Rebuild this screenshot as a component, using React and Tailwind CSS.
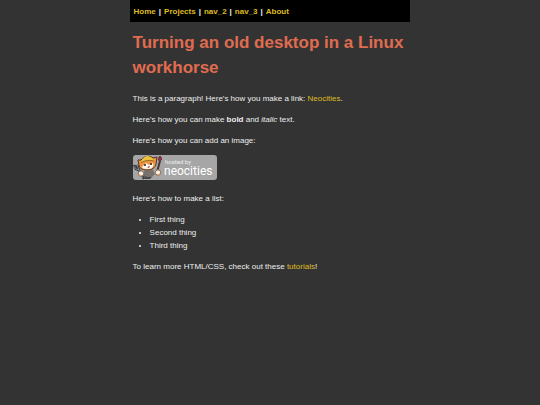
const navLinks = ['Home', 'Projects', 'nav_2', 'nav_3', 'About'];

const things = ['First thing', 'Second thing', 'Third thing'];

const Link = ({ children }) => (
    <a href="#" className="text-[#dfbd22]">
        {children}
    </a>
);

const NeocitiesBadge = () => (
    <a href="#" className="block h-[29px]">
        <svg width="84" height="26" viewBox="0 0 84 26" role="img" aria-label="Hosted by Neocities">
            <rect x="0" y="0" width="84" height="25" rx="3" fill="#a6a6a6" />
            {/* Body and feet */}
            <path d="M11 16 L20 15 L22 19 L19 22 L14 22 L11 20Z" fill="#77706d" />
            <path d="M11 20 L14 22 L19 22 L17 24 L12 24Z" fill="#4a4544" />
            {/* Fork */}
            <path d="M1 10 L3 14 L6 15 L11 24 M4 10 L6 15" stroke="#303234" strokeWidth="2.500" fill="none" />
            <path d="M1 11 L3 14 L6 15 L10 23 M4 10 L6 15" stroke="#858b8f" strokeWidth="1" fill="none" />
            {/* Brush */}
            <path d="M27 6 L24 17" stroke="#4d3434" strokeWidth="2" />
            <path d="M27 1 C29 3 29 5 27 6 C25 6 25 3 27 1Z" fill="#a02c48" stroke="#5a2634" strokeWidth="1" />
            {/* Head */}
            <path d="M5 5 L8 5 C11 1 17 0 20 3 L24 2 L23 9 C22 13 19 15 14 15 C9 15 6 13 6 10Z" fill="#ee9543" stroke="#4b3426" strokeWidth="1" />
            <path d="M9 12 L13 8 L16 10 L20 8 C21 12 19 14 14 14 C11 14 9 13 9 12Z" fill="#fff7ee" />
            <path d="M8 8 C9 3 12 1 15 1 C18 2 20 3 21 6 C16 5 12 6 8 8Z" fill="#edc33a" />
            <path d="M8 8 C12 5 17 5 21 6" stroke="#94652a" strokeWidth="1" fill="none" />
            <circle cx="12" cy="10" r="1" fill="#292321" />
            <circle cx="18" cy="9" r="1" fill="#292321" />
            <path d="M14 12 L17 11 L16 13Z" fill="#8e4546" />
            {/* Paws */}
            <circle cx="8" cy="18.500" r="2.700" fill="#fff1e4" stroke="#85624b" strokeWidth="1" />
            <circle cx="25" cy="17.500" r="2.700" fill="#fff1e4" stroke="#85624b" strokeWidth="1" />
            <path d="M6 19 L7 21 M27 19 L25 20" stroke="#e59a51" strokeWidth="1" />
            <text x="32" y="9" fill="#eee" className="font-[Roboto,sans-serif] text-[6px]">
                hosted by
            </text>
            <text x="31" y="20" fill="#fff" className="font-[Roboto,sans-serif] text-[12px]">
                neocities
            </text>
        </svg>
    </a>
);

const App = () => {
    return (
        <div className="min-h-screen bg-[#333333] font-['Liberation_Sans',Arial,sans-serif] text-[8px] leading-[13px] text-[#eeeeee]">
            <div className="mx-auto w-[52%]">
                <nav className="flex h-[22px] items-center gap-[3px] bg-black px-1 font-bold">
                    {navLinks.map((name, i) => (
                        <span key={name} className="flex gap-[3px]">
                            <Link>{name}</Link>
                            {i < navLinks.length - 1 && <span>|</span>}
                        </span>
                    ))}
                </nav>

                <main className="flex flex-col gap-2 px-[3px] pt-2">
                    <h1 className="mb-1 text-[17px] leading-[25px] font-bold text-[#e06c50]">
                        Turning an old desktop in a Linux workhorse
                    </h1>

                    <p>
                        This is a paragraph! Here's how you make a link: <Link>Neocities</Link>.
                    </p>
                    <p>
                        Here's how you can make <strong>bold</strong> and <em>italic</em> text.
                    </p>
                    <p>Here's how you can add an image:</p>

                    <NeocitiesBadge />

                    <p>Here's how to make a list:</p>
                    <ul className="list-disc pl-[17px]">
                        {things.map((thing) => (
                            <li key={thing}>{thing}</li>
                        ))}
                    </ul>

                    <p>
                        To learn more HTML/CSS, check out these <Link>tutorials</Link>!
                    </p>
                </main>
            </div>
        </div>
    );
};

export default App;
